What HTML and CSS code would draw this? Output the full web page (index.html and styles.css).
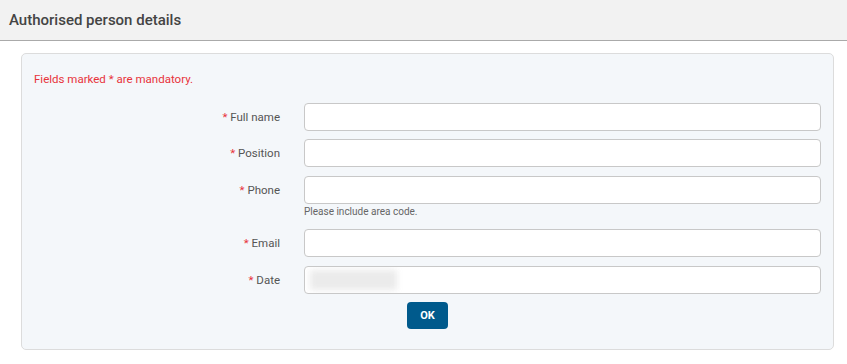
FILE: index.html
```html
<!DOCTYPE html>
<html lang="en">

<head>
  <meta charset="UTF-8">
  <meta name="viewport" content="width=device-width, initial-scale=1.0">
  <title>Authorised person details</title>
  <link rel="stylesheet" href="styles.css">
</head>

<body>
  <div class="page-header">
    <h2>Authorised person details</h2>
  </div>

  <div class="panel">
    <p class="mandatory-note">Fields marked * are mandatory.</p>

    <form class="person-form">
      <div class="form-row">
        <label for="fullName"><span class="req">*</span> Full name</label>
        <input type="text" id="fullName">
      </div>

      <div class="form-row">
        <label for="position"><span class="req">*</span> Position</label>
        <input type="text" id="position">
      </div>

      <div class="form-row">
        <label for="phone"><span class="req">*</span> Phone</label>
        <div class="field">
          <input type="text" id="phone">
          <div class="help-text">Please include area code.</div>
        </div>
      </div>

      <div class="form-row">
        <label for="email"><span class="req">*</span> Email</label>
        <input type="text" id="email">
      </div>

      <div class="form-row">
        <label for="date"><span class="req">*</span> Date</label>
        <div class="date-input">
          <span class="blurred-value"></span>
        </div>
      </div>

      <div class="actions">
        <button type="button" class="ok-btn">OK</button>
      </div>
    </form>
  </div>
</body>

</html>
```

FILE: styles.css
```css
body {
  margin: 0;
  font-family: Roboto, "Liberation Sans", Arial, sans-serif;
  color: #555;
  background-color: #fff;
}

.page-header {
  height: 40px;
  background-color: #f2f2f2;
  border-bottom: 1px solid #aaa;
  display: flex;
  align-items: center;
  padding-left: 9px;
}

.page-header h2 {
  margin: 0;
  font-size: 15px;
  font-weight: 500;
  color: #444;
}

.panel {
  margin: 12px 13px 0 21px;
  background-color: #f4f7fa;
  border: 1px solid #dcdcdc;
  border-radius: 5px;
  padding: 16px 11px 20px 12px;
}

.mandatory-note {
  margin: 0 0 15px;
  font-size: 11.5px;
  line-height: 18px;
  color: #e8333a;
}

.person-form {
  display: flex;
  flex-direction: column;
}

.form-row {
  display: grid;
  grid-template-columns: 246px 517px;
  column-gap: 24px;
  align-items: start;
  margin-bottom: 8px;
}

.form-row:nth-child(2),
.form-row:nth-child(4) {
  margin-bottom: 9px;
}

.form-row label {
  text-align: right;
  font-size: 11.5px;
  line-height: 28px;
  color: #555;
}

.req {
  color: #e8333a;
}

input[type="text"],
.date-input {
  box-sizing: border-box;
  width: 100%;
  height: 28px;
  margin: 0;
  border: 1px solid #c8c8c8;
  border-radius: 4px;
  background-color: #fff;
  font-family: inherit;
  font-size: 12px;
  padding: 0 8px;
}

.help-text {
  font-size: 10px;
  line-height: 14px;
  margin-top: 1px;
  color: #666;
}

.form-row:nth-child(3) {
  margin-bottom: 10px;
}

.date-input {
  display: flex;
  align-items: center;
  padding: 0 5px;
  overflow: hidden;
}

.blurred-value {
  display: block;
  width: 87px;
  height: 20px;
  background-color: #ebebeb;
  filter: blur(3px);
}

.actions {
  padding-left: 373px;
}

.ok-btn {
  width: 41px;
  height: 27px;
  border: none;
  border-radius: 4px;
  background-color: #005a8c;
  color: #fff;
  font-family: inherit;
  font-size: 11px;
  font-weight: 700;
  cursor: pointer;
}
```
